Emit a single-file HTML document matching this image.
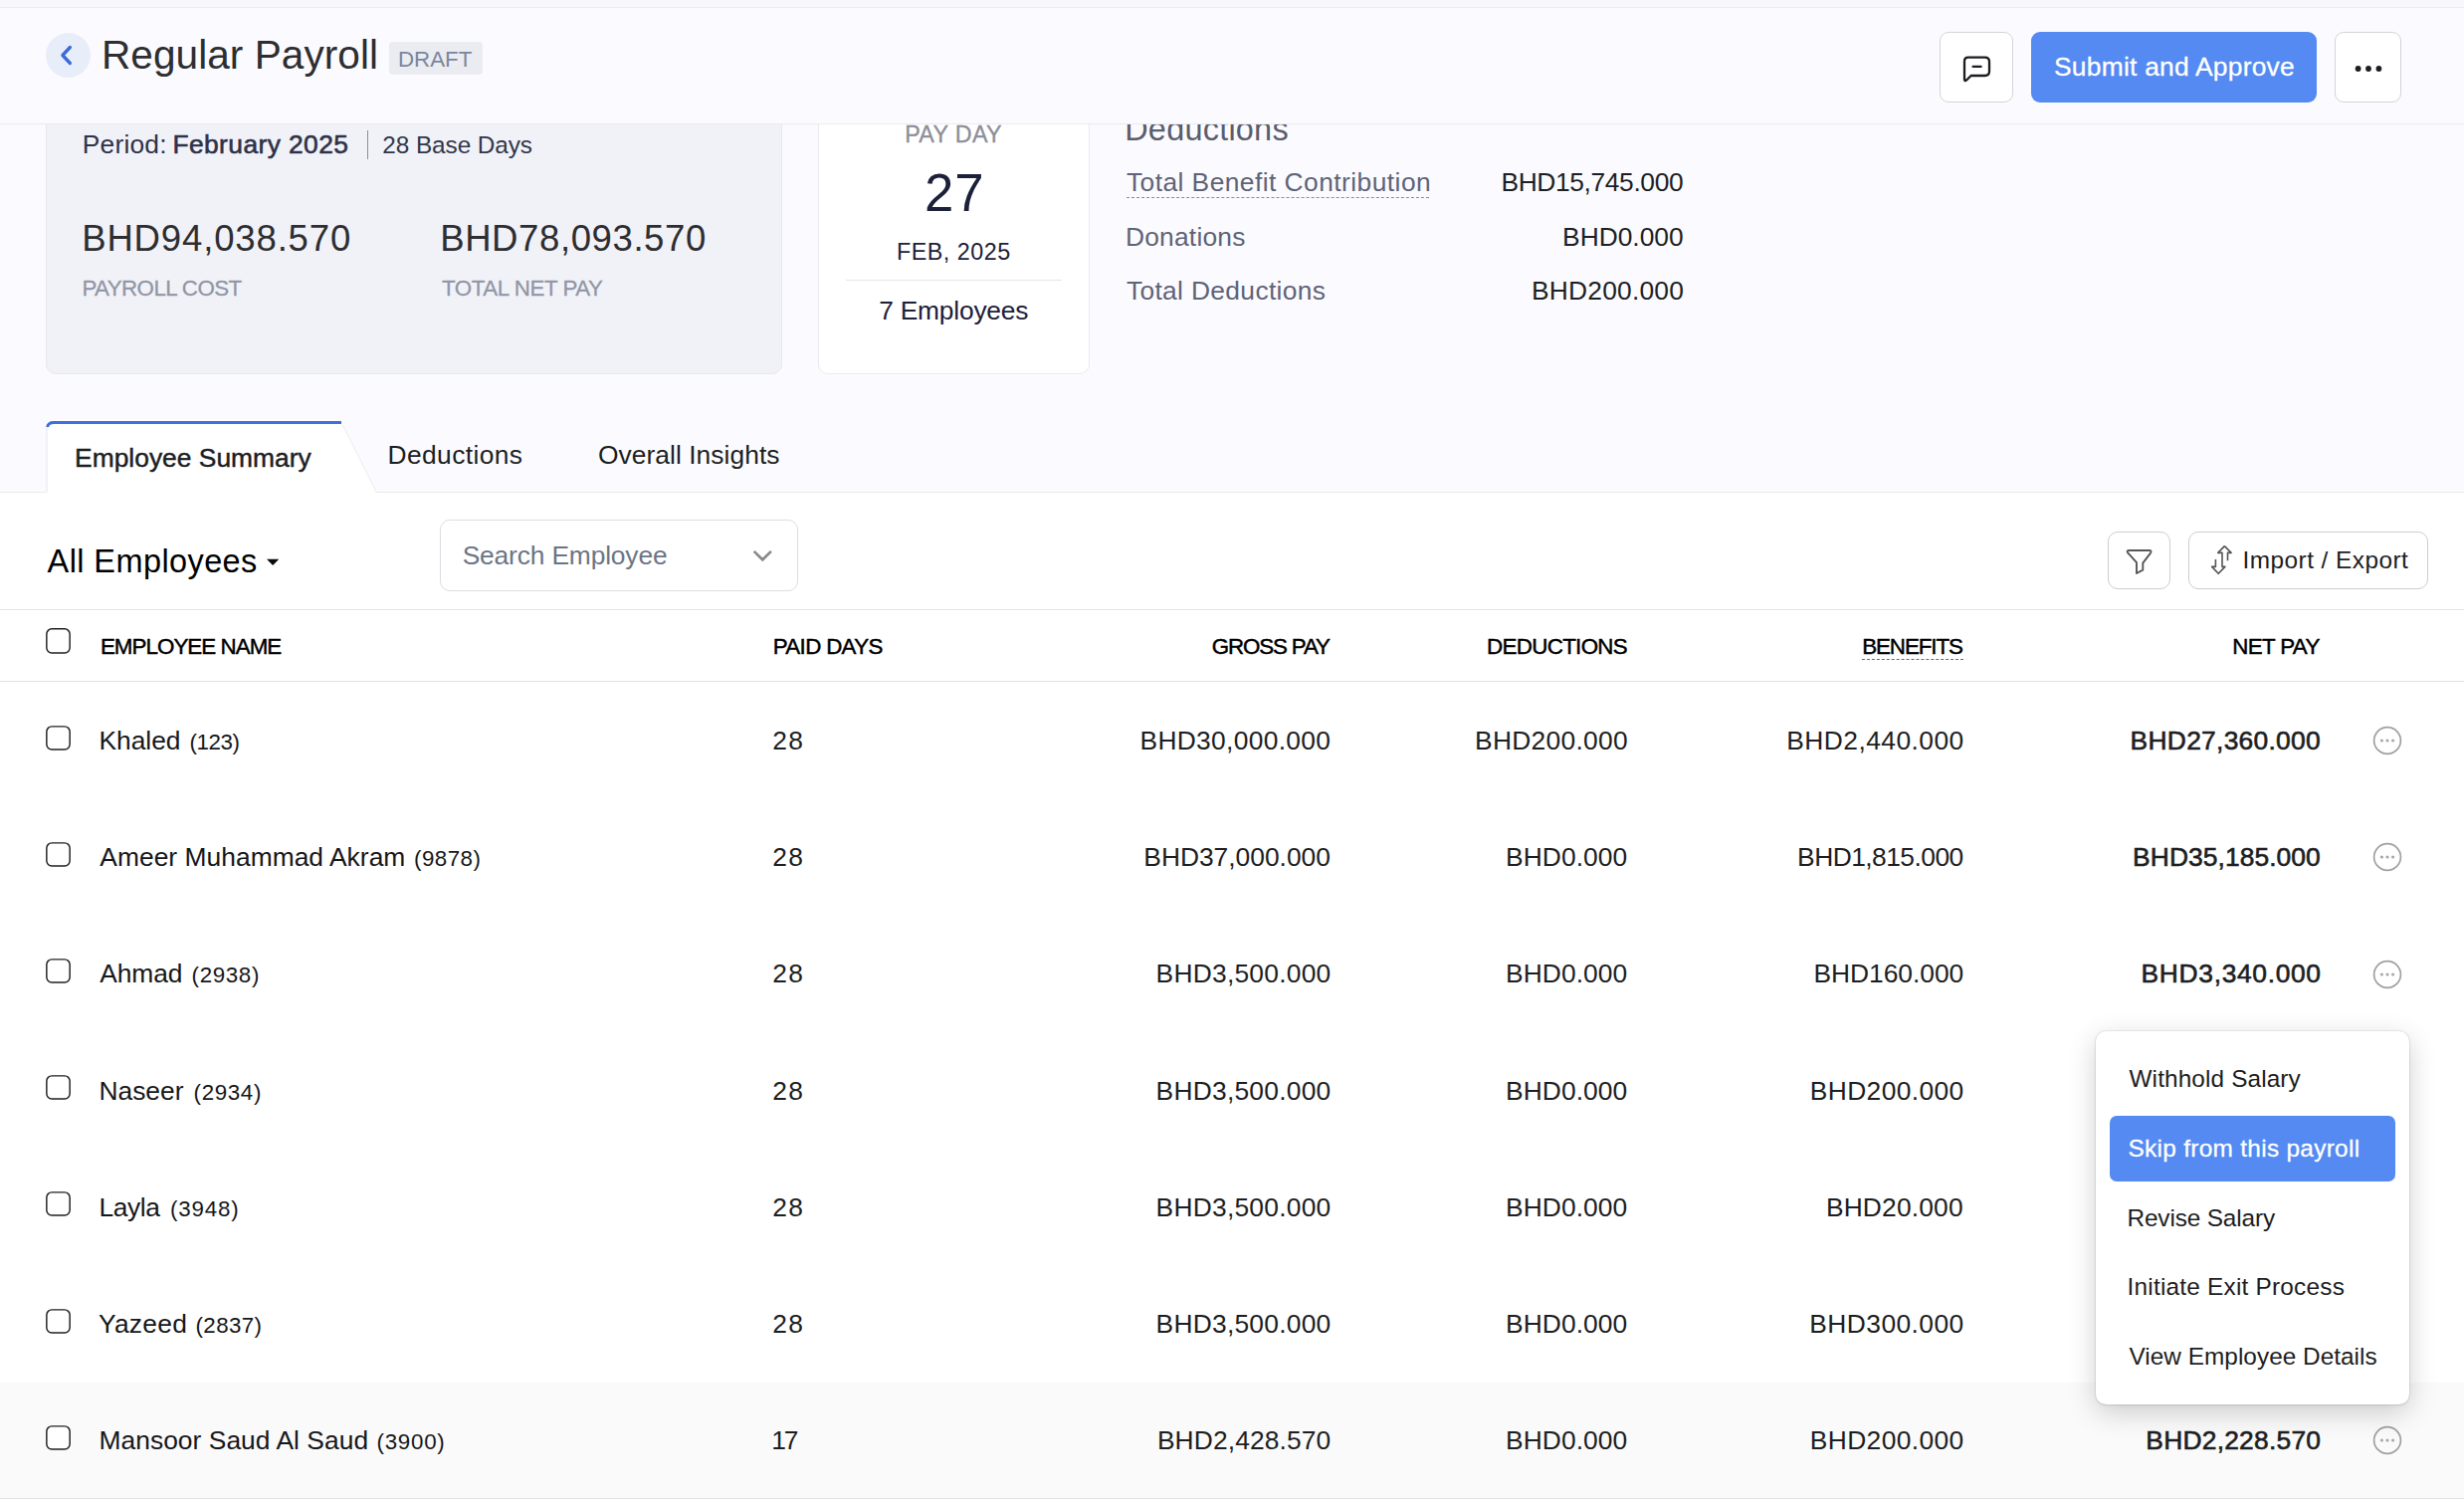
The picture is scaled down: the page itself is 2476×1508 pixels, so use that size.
<!DOCTYPE html>
<html lang="en">
<head>
<meta charset="utf-8">
<title>Regular Payroll</title>
<style>
*{box-sizing:border-box;margin:0;padding:0}
html{width:2476px;height:1508px}
body{width:2476px;height:1508px;overflow:hidden}
body{background:#fbfbff;font-family:"Liberation Sans",sans-serif;position:relative}
.t{position:absolute;white-space:nowrap;display:block}
.abs{position:absolute}
#page{position:absolute;left:0;top:0;width:2476px;height:1508px;overflow:hidden}
#hdr{position:absolute;left:0;top:0;width:2476px;height:125px;background:#fbfbff;border-bottom:1px solid #ebebef;z-index:10}
#strip{position:absolute;left:0;top:0;width:2476px;height:8px;background:#f7f7fc;border-bottom:1.4px solid #ebebef}
.back{position:absolute;left:45.8px;top:32.8px;width:45.4px;height:45.4px;border-radius:50%;background:#e8edfa}
.badge{position:absolute;left:391px;top:42px;width:94px;height:33px;border-radius:4px;background:#ebecf1}
.btn{position:absolute;border:1px solid #d4d4d9;border-radius:9px;background:#fff}
.primary{position:absolute;left:2041px;top:32px;width:287.2px;height:71px;border-radius:9px;background:#548af1}
.card1{position:absolute;left:46px;top:90px;width:740px;height:286px;background:#f1f2f8;border:1px solid #e7e8ef;border-radius:10px}
.card2{position:absolute;left:822px;top:90px;width:273px;height:286px;background:#fff;border:1px solid #e9e9f0;border-radius:10px}
.vdiv{position:absolute;left:369px;top:131px;width:1px;height:29px;background:#8d8f9b}
.hdiv{position:absolute;left:850px;top:280.8px;width:217px;height:1.5px;background:#e6e6ea}
.dash{position:absolute;height:0;border-top:1px dashed #8a8c99}
#white{position:absolute;left:0;top:495px;width:2476px;height:1013px;background:#fff}
.line{position:absolute;left:0;width:2476px;height:1px;background:#e2e2e6}
.search{position:absolute;left:442px;top:522px;width:360px;height:72px;border:1px solid #dcdde3;border-radius:10px;background:#fff}
.cb{position:absolute;left:46px;width:25px;height:25px;display:block;overflow:visible}
.more{position:absolute;left:2384.4px}
.hover{position:absolute;left:0;top:1388.5px;width:2476px;height:117px;background:#fafafa}
#menu{position:absolute;left:2106px;top:1035.5px;width:315px;height:375px;background:#fff;border-radius:10.5px;box-shadow:0 8px 28px rgba(0,0,0,.19),0 1px 3px rgba(0,0,0,.07),0 0 0 1px rgba(200,200,220,.25);z-index:20}
.hl{position:absolute;left:2120px;top:1120.5px;width:287px;height:66.5px;border-radius:7px;background:#548af1;z-index:21}
#menutext{position:absolute;left:0;top:0;z-index:22}
@media (min-width:1236px) and (max-width:1240px){html{zoom:.5}}
</style>
</head>
<body>
<div id="page">
  <div class="card1"></div>
  <div class="vdiv"></div>
  <div class="card2"></div>
  <div class="hdiv"></div>
  <div class="dash" style="left:1132px;top:198px;width:304px"></div>

  <!-- tab bar + white area -->
  <div id="white"></div>
  <div class="line" style="top:494px;background:#e9e9ee"></div>
  <svg class="abs" style="left:40px;top:418px" width="350" height="80" viewBox="40 418 350 80">
    <path d="M47 495 V431 Q47 425 53 425 H337 Q343.5 425 346 430 L378.5 495 Z" fill="#fff"/>
    <path d="M47 494.5 V431 Q47 425 53 425" fill="none" stroke="#e6e6ec" stroke-width="1"/>
    <path d="M343 427 Q345 428 346.5 431 L378.5 495" fill="none" stroke="#ececf1" stroke-width="1"/>
    <path d="M47.6 429 Q48.5 424.6 54 424.6 H343" fill="none" stroke="#3d70d8" stroke-width="3"/>
  </svg>

  <!-- toolbar -->
  <svg class="abs" style="left:268px;top:561px" width="13" height="8" viewBox="0 0 13 8"><path d="M0 0.8 H12.3 L6.15 7 Z" fill="#0a0a0a"/></svg>
  <div class="search"></div>
  <svg class="abs" style="left:755px;top:551px" width="22" height="14" viewBox="0 0 22 14"><path d="M2.7 2.9 L11.3 11.3 L19.9 2.9" fill="none" stroke="#88898d" stroke-width="2.7" stroke-linejoin="miter"/></svg>
  <div class="btn" style="left:2118px;top:534px;width:63px;height:58px;border-color:#cdcdd0;border-radius:10px"></div>
  <svg class="abs" style="left:2134px;top:549px" width="32" height="32" viewBox="2134 549 32 32"><path d="M2139.4 553 H2159.6 Q2162.6 553 2161 555.6 L2153.3 565.6 V572.6 L2147 576 V565.2 L2138.2 555.4 Q2136.6 553 2139.4 553 Z" fill="none" stroke="#565657" stroke-width="1.9" stroke-linejoin="round"/></svg>
  <div class="btn" style="left:2199px;top:534px;width:241px;height:58px;border-color:#cdcdd0;border-radius:10px"></div>
  <svg class="abs" style="left:2220px;top:546px" width="26" height="32" viewBox="0 0 26 32">
    <path transform="translate(-2220 -546)" d="M2235.4 548.6 L2242.1 555.4 H2238.5 V563.2 M2235.4 548.6 L2228.8 555.4 H2233 V569.4 H2235.9 L2229.25 576.3 L2222.6 569.4 H2226.4 V562.1" fill="none" stroke="#555557" stroke-width="1.6" stroke-linejoin="round" stroke-linecap="butt"/>
  </svg>
  <div class="line" style="top:612px"></div>

  <!-- table -->
  <svg class="cb" style="top:631.2px;height:25.8px" viewBox="0 0 25 25.8"><rect x="0.85" y="0.85" width="23.3" height="24.1" rx="5.2" fill="#fff" stroke="#202022" stroke-width="1.45"/></svg>
  <div class="dash" style="left:1871px;top:662px;width:102px;border-top-color:#6b6b70"></div>
  <div class="line" style="top:684px"></div>
  <div class="hover"></div>
  <div class="line" style="top:1505px"></div>
<svg class="cb" style="top:728.6px" viewBox="0 0 25 25"><rect x="0.85" y="0.85" width="23.3" height="23.2" rx="5.2" fill="#fff" stroke="#202022" stroke-width="1.45"/></svg>
<svg class="cb" style="top:845.8px" viewBox="0 0 25 25"><rect x="0.85" y="0.85" width="23.3" height="23.2" rx="5.2" fill="#fff" stroke="#202022" stroke-width="1.45"/></svg>
<svg class="cb" style="top:963.0px" viewBox="0 0 25 25"><rect x="0.85" y="0.85" width="23.3" height="23.2" rx="5.2" fill="#fff" stroke="#202022" stroke-width="1.45"/></svg>
<svg class="cb" style="top:1080.2px" viewBox="0 0 25 25"><rect x="0.85" y="0.85" width="23.3" height="23.2" rx="5.2" fill="#fff" stroke="#202022" stroke-width="1.45"/></svg>
<svg class="cb" style="top:1197.4px" viewBox="0 0 25 25"><rect x="0.85" y="0.85" width="23.3" height="23.2" rx="5.2" fill="#fff" stroke="#202022" stroke-width="1.45"/></svg>
<svg class="cb" style="top:1314.6px" viewBox="0 0 25 25"><rect x="0.85" y="0.85" width="23.3" height="23.2" rx="5.2" fill="#fff" stroke="#202022" stroke-width="1.45"/></svg>
<svg class="cb" style="top:1431.8px" viewBox="0 0 25 25"><rect x="0.85" y="0.85" width="23.3" height="23.2" rx="5.2" fill="#fff" stroke="#202022" stroke-width="1.45"/></svg>
<svg class="more" style="top:729.2px" width="30" height="30" viewBox="0 0 30 30"><circle cx="15" cy="15" r="13.4" fill="none" stroke="#a0a0a0" stroke-width="1.7"/><circle cx="9.4" cy="15" r="1.6" fill="#a8a8a8"/><circle cx="15" cy="15" r="1.6" fill="#a8a8a8"/><circle cx="20.6" cy="15" r="1.6" fill="#a8a8a8"/></svg>
<svg class="more" style="top:846.4px" width="30" height="30" viewBox="0 0 30 30"><circle cx="15" cy="15" r="13.4" fill="none" stroke="#a0a0a0" stroke-width="1.7"/><circle cx="9.4" cy="15" r="1.6" fill="#a8a8a8"/><circle cx="15" cy="15" r="1.6" fill="#a8a8a8"/><circle cx="20.6" cy="15" r="1.6" fill="#a8a8a8"/></svg>
<svg class="more" style="top:963.6px" width="30" height="30" viewBox="0 0 30 30"><circle cx="15" cy="15" r="13.4" fill="none" stroke="#a0a0a0" stroke-width="1.7"/><circle cx="9.4" cy="15" r="1.6" fill="#a8a8a8"/><circle cx="15" cy="15" r="1.6" fill="#a8a8a8"/><circle cx="20.6" cy="15" r="1.6" fill="#a8a8a8"/></svg>
<svg class="more" style="top:1432.4px" width="30" height="30" viewBox="0 0 30 30"><circle cx="15" cy="15" r="13.4" fill="none" stroke="#a0a0a0" stroke-width="1.7"/><circle cx="9.4" cy="15" r="1.6" fill="#a8a8a8"/><circle cx="15" cy="15" r="1.6" fill="#a8a8a8"/><circle cx="20.6" cy="15" r="1.6" fill="#a8a8a8"/></svg>
<span class="t" style="left:82.75px;top:132px;color:#2e3248;letter-spacing:0.208px;font-size:26.39px;line-height:26.39px;">Period:</span>
<span class="t" style="left:173.4px;top:132px;color:#2e3248;letter-spacing:0.417px;font-size:26.39px;line-height:26.39px;-webkit-text-stroke:0.6px #2e3248;">February 2025</span>
<span class="t" style="left:384.3px;top:134px;color:#33364a;letter-spacing:-0.082px;font-size:24.36px;line-height:24.36px;">28 Base Days</span>
<span class="t" style="left:82.2px;top:222px;color:#2e2e31;letter-spacing:0.842px;font-size:36.54px;line-height:36.54px;">BHD94,038.570</span>
<span class="t" style="left:442.2px;top:222px;color:#2e2e31;letter-spacing:0.592px;font-size:36.54px;line-height:36.54px;">BHD78,093.570</span>
<span class="t" style="left:82.4px;top:279px;color:#9196a6;letter-spacing:-0.573px;font-size:22.33px;line-height:22.33px;-webkit-text-stroke:0.3px #9196a6;">PAYROLL COST</span>
<span class="t" style="left:444.0px;top:279px;color:#9196a6;letter-spacing:-0.425px;font-size:22.33px;line-height:22.33px;-webkit-text-stroke:0.3px #9196a6;">TOTAL NET PAY</span>
<span class="t" style="left:909.2px;top:124px;color:#8c8e98;letter-spacing:0.317px;font-size:23.34px;line-height:23.34px;-webkit-text-stroke:0.3px #8c8e98;">PAY DAY</span>
<span class="t" style="left:929.0px;top:168px;color:#1c2039;letter-spacing:0.8px;font-size:52.78px;line-height:52.78px;">27</span>
<span class="t" style="left:900.9px;top:242px;color:#1c2039;letter-spacing:0.525px;font-size:23.34px;line-height:23.34px;">FEB, 2025</span>
<span class="t" style="left:883.2px;top:299px;color:#1c2039;letter-spacing:-0.22px;font-size:26.39px;line-height:26.39px;">7 Employees</span>
<span class="t" style="left:1130.2px;top:114px;color:#5a5d6e;letter-spacing:0.222px;font-size:32.48px;line-height:32.48px;">Deductions</span>
<span class="t" style="left:1131.9px;top:170px;color:#5f6377;letter-spacing:0.444px;font-size:26.39px;line-height:26.39px;">Total Benefit Contribution</span>
<span class="t" style="left:1508.5px;top:170px;color:#1e1f24;letter-spacing:-0.383px;font-size:26.39px;line-height:26.39px;">BHD15,745.000</span>
<span class="t" style="left:1130.9px;top:225px;color:#5f6377;letter-spacing:0.225px;font-size:26.39px;line-height:26.39px;">Donations</span>
<span class="t" style="left:1570.1px;top:225px;color:#1e1f24;letter-spacing:-0.029px;font-size:26.39px;line-height:26.39px;">BHD0.000</span>
<span class="t" style="left:1131.9px;top:279px;color:#5f6377;letter-spacing:0.34px;font-size:26.39px;line-height:26.39px;">Total Deductions</span>
<span class="t" style="left:1538.9px;top:279px;color:#1e1f24;letter-spacing:0.222px;font-size:26.39px;line-height:26.39px;">BHD200.000</span>
<span class="t" style="left:75.1px;top:447px;color:#1d1e22;letter-spacing:0.013px;font-size:26.39px;line-height:26.39px;-webkit-text-stroke:0.45px #1d1e22;">Employee Summary</span>
<span class="t" style="left:389.6px;top:444px;color:#1d1e22;letter-spacing:0.378px;font-size:26.39px;line-height:26.39px;">Deductions</span>
<span class="t" style="left:600.9px;top:444px;color:#1d1e22;letter-spacing:0.053px;font-size:26.39px;line-height:26.39px;">Overall Insights</span>
<span class="t" style="left:47.6px;top:548px;color:#000000;letter-spacing:0.417px;font-size:32.48px;line-height:32.48px;">All Employees</span>
<span class="t" style="left:464.7px;top:545px;color:#6c7585;letter-spacing:-0.164px;font-size:26.39px;line-height:26.39px;">Search Employee</span>
<span class="t" style="left:2253.6px;top:551px;color:#1d1e22;letter-spacing:0.457px;font-size:24.36px;line-height:24.36px;">Import / Export</span>
<span class="t" style="left:100.9px;top:639px;color:#000000;letter-spacing:-0.933px;font-size:22.33px;line-height:22.33px;-webkit-text-stroke:0.45px #000000;">EMPLOYEE NAME</span>
<span class="t" style="left:776.8px;top:639px;color:#000000;letter-spacing:-0.663px;font-size:22.33px;line-height:22.33px;-webkit-text-stroke:0.45px #000000;">PAID DAYS</span>
<span class="t" style="left:1217.7px;top:639px;color:#000000;letter-spacing:-1.125px;font-size:22.33px;line-height:22.33px;-webkit-text-stroke:0.45px #000000;">GROSS PAY</span>
<span class="t" style="left:1494.1px;top:639px;color:#000000;letter-spacing:-0.667px;font-size:22.33px;line-height:22.33px;-webkit-text-stroke:0.45px #000000;">DEDUCTIONS</span>
<span class="t" style="left:1871.2px;top:639px;color:#000000;letter-spacing:-1.071px;font-size:22.33px;line-height:22.33px;-webkit-text-stroke:0.45px #000000;">BENEFITS</span>
<span class="t" style="left:2243.2px;top:639px;color:#000000;letter-spacing:-0.617px;font-size:22.33px;line-height:22.33px;-webkit-text-stroke:0.45px #000000;">NET PAY</span>
<span class="t" style="left:99.5px;top:731px;color:#16171a;letter-spacing:-0.02px;font-size:26.39px;line-height:26.39px;">Khaled</span>
<span class="t" style="left:190.5px;top:735px;color:#16171a;letter-spacing:-0.45px;font-size:22.33px;line-height:22.33px;">(123)</span>
<span class="t" style="left:776.3px;top:731px;color:#1d1e22;letter-spacing:1.2px;font-size:26.39px;line-height:26.39px;">28</span>
<span class="t" style="left:1145.5px;top:731px;color:#1d1e22;letter-spacing:0.308px;font-size:26.39px;line-height:26.39px;">BHD30,000.000</span>
<span class="t" style="left:1482.0px;top:731px;color:#1d1e22;letter-spacing:0.289px;font-size:26.39px;line-height:26.39px;">BHD200.000</span>
<span class="t" style="left:1795.3px;top:731px;color:#1d1e22;letter-spacing:0.445px;font-size:26.39px;line-height:26.39px;">BHD2,440.000</span>
<span class="t" style="left:2140.6px;top:731px;color:#1d1e22;letter-spacing:0.283px;font-size:26.39px;line-height:26.39px;-webkit-text-stroke:0.6px #1d1e22;">BHD27,360.000</span>
<span class="t" style="left:100.3px;top:848px;color:#16171a;letter-spacing:0.037px;font-size:26.39px;line-height:26.39px;">Ameer Muhammad Akram</span>
<span class="t" style="left:416.1px;top:852px;color:#16171a;letter-spacing:0.46px;font-size:22.33px;line-height:22.33px;">(9878)</span>
<span class="t" style="left:776.3px;top:848px;color:#1d1e22;letter-spacing:1.2px;font-size:26.39px;line-height:26.39px;">28</span>
<span class="t" style="left:1149.3px;top:848px;color:#1d1e22;letter-spacing:-0.008px;font-size:26.39px;line-height:26.39px;">BHD37,000.000</span>
<span class="t" style="left:1513.0px;top:848px;color:#1d1e22;letter-spacing:0.086px;font-size:26.39px;line-height:26.39px;">BHD0.000</span>
<span class="t" style="left:1806.1px;top:848px;color:#1d1e22;letter-spacing:-0.536px;font-size:26.39px;line-height:26.39px;">BHD1,815.000</span>
<span class="t" style="left:2143.1px;top:848px;color:#1d1e22;letter-spacing:0.075px;font-size:26.39px;line-height:26.39px;-webkit-text-stroke:0.6px #1d1e22;">BHD35,185.000</span>
<span class="t" style="left:100.3px;top:965px;color:#16171a;letter-spacing:-0.1px;font-size:26.39px;line-height:26.39px;">Ahmad</span>
<span class="t" style="left:192.6px;top:969px;color:#16171a;letter-spacing:0.64px;font-size:22.33px;line-height:22.33px;">(2938)</span>
<span class="t" style="left:776.3px;top:965px;color:#1d1e22;letter-spacing:1.2px;font-size:26.39px;line-height:26.39px;">28</span>
<span class="t" style="left:1161.6px;top:965px;color:#1d1e22;letter-spacing:0.236px;font-size:26.39px;line-height:26.39px;">BHD3,500.000</span>
<span class="t" style="left:1513.0px;top:965px;color:#1d1e22;letter-spacing:0.086px;font-size:26.39px;line-height:26.39px;">BHD0.000</span>
<span class="t" style="left:1822.5px;top:965px;color:#1d1e22;letter-spacing:-0.033px;font-size:26.39px;line-height:26.39px;">BHD160.000</span>
<span class="t" style="left:2151.6px;top:965px;color:#1d1e22;letter-spacing:0.673px;font-size:26.39px;line-height:26.39px;-webkit-text-stroke:0.6px #1d1e22;">BHD3,340.000</span>
<span class="t" style="left:99.5px;top:1083px;color:#16171a;letter-spacing:-0.02px;font-size:26.39px;line-height:26.39px;">Naseer</span>
<span class="t" style="left:194.6px;top:1087px;color:#16171a;letter-spacing:0.64px;font-size:22.33px;line-height:22.33px;">(2934)</span>
<span class="t" style="left:776.3px;top:1083px;color:#1d1e22;letter-spacing:1.2px;font-size:26.39px;line-height:26.39px;">28</span>
<span class="t" style="left:1161.6px;top:1083px;color:#1d1e22;letter-spacing:0.236px;font-size:26.39px;line-height:26.39px;">BHD3,500.000</span>
<span class="t" style="left:1513.0px;top:1083px;color:#1d1e22;letter-spacing:0.086px;font-size:26.39px;line-height:26.39px;">BHD0.000</span>
<span class="t" style="left:1818.8px;top:1083px;color:#1d1e22;letter-spacing:0.378px;font-size:26.39px;line-height:26.39px;">BHD200.000</span>
<span class="t" style="left:99.5px;top:1200px;color:#16171a;letter-spacing:-0.425px;font-size:26.39px;line-height:26.39px;">Layla</span>
<span class="t" style="left:171.0px;top:1204px;color:#16171a;letter-spacing:0.84px;font-size:22.33px;line-height:22.33px;">(3948)</span>
<span class="t" style="left:776.3px;top:1200px;color:#1d1e22;letter-spacing:1.2px;font-size:26.39px;line-height:26.39px;">28</span>
<span class="t" style="left:1161.6px;top:1200px;color:#1d1e22;letter-spacing:0.236px;font-size:26.39px;line-height:26.39px;">BHD3,500.000</span>
<span class="t" style="left:1513.0px;top:1200px;color:#1d1e22;letter-spacing:0.086px;font-size:26.39px;line-height:26.39px;">BHD0.000</span>
<span class="t" style="left:1834.9px;top:1200px;color:#1d1e22;letter-spacing:0.163px;font-size:26.39px;line-height:26.39px;">BHD20.000</span>
<span class="t" style="left:99.0px;top:1317px;color:#16171a;letter-spacing:0.28px;font-size:26.39px;line-height:26.39px;">Yazeed</span>
<span class="t" style="left:196.6px;top:1321px;color:#16171a;letter-spacing:0.34px;font-size:22.33px;line-height:22.33px;">(2837)</span>
<span class="t" style="left:776.3px;top:1317px;color:#1d1e22;letter-spacing:1.2px;font-size:26.39px;line-height:26.39px;">28</span>
<span class="t" style="left:1161.6px;top:1317px;color:#1d1e22;letter-spacing:0.236px;font-size:26.39px;line-height:26.39px;">BHD3,500.000</span>
<span class="t" style="left:1513.0px;top:1317px;color:#1d1e22;letter-spacing:0.086px;font-size:26.39px;line-height:26.39px;">BHD0.000</span>
<span class="t" style="left:1818.3px;top:1317px;color:#1d1e22;letter-spacing:0.433px;font-size:26.39px;line-height:26.39px;">BHD300.000</span>
<span class="t" style="left:99.5px;top:1434px;color:#16171a;letter-spacing:0.042px;font-size:26.39px;line-height:26.39px;">Mansoor Saud Al Saud</span>
<span class="t" style="left:378.5px;top:1438px;color:#16171a;letter-spacing:0.74px;font-size:22.33px;line-height:22.33px;">(3900)</span>
<span class="t" style="left:775.3px;top:1434px;color:#1d1e22;letter-spacing:-2.3px;font-size:26.39px;line-height:26.39px;">17</span>
<span class="t" style="left:1162.9px;top:1434px;color:#1d1e22;letter-spacing:0.118px;font-size:26.39px;line-height:26.39px;">BHD2,428.570</span>
<span class="t" style="left:1513.0px;top:1434px;color:#1d1e22;letter-spacing:0.086px;font-size:26.39px;line-height:26.39px;">BHD0.000</span>
<span class="t" style="left:1818.8px;top:1434px;color:#1d1e22;letter-spacing:0.378px;font-size:26.39px;line-height:26.39px;">BHD200.000</span>
<span class="t" style="left:2156.3px;top:1434px;color:#1d1e22;letter-spacing:0.245px;font-size:26.39px;line-height:26.39px;-webkit-text-stroke:0.6px #1d1e22;">BHD2,228.570</span>
</div>

<div id="hdr">
  <div id="strip"></div>
  <div class="back"></div>
  <svg class="abs" style="left:56px;top:42px" width="24" height="27" viewBox="56 42 24 27"><path d="M70.4 47.5 L62.9 55.5 L70.4 63.5" fill="none" stroke="#3b6bd6" stroke-width="3.3" stroke-linecap="round" stroke-linejoin="round"/></svg>
  <div class="badge"></div>
  <div class="btn" style="left:1949px;top:32px;width:74px;height:71px"></div>
  <svg class="abs" style="left:1968px;top:52px" width="36" height="36" viewBox="0 0 36 36"><path d="M9.8 5.6 H26.6 Q31 5.6 31 10 V19.6 Q31 24 26.6 24 H12.6 L8.4 28.2 Q6 30.4 6 27.4 V9.4 Q6 5.6 9.8 5.6 Z" fill="none" stroke="#1b1c20" stroke-width="2.3" stroke-linejoin="round"/><path d="M14.6 14.9 H22.6" stroke="#1b1c20" stroke-width="2.3" stroke-linecap="round"/></svg>
  <div class="primary"></div>
  <div class="btn" style="left:2346px;top:32px;width:67px;height:71px"></div>
  <svg class="abs" style="left:2364px;top:64px" width="32" height="10" viewBox="0 0 32 10"><circle cx="5.6" cy="5" r="2.9" fill="#1d1e22"/><circle cx="16" cy="5" r="2.9" fill="#1d1e22"/><circle cx="26.4" cy="5" r="2.9" fill="#1d1e22"/></svg>
<span class="t" style="left:102.0px;top:35px;color:#2e2e31;letter-spacing:0.043px;font-size:40.6px;line-height:40.6px;">Regular Payroll</span>
<span class="t" style="left:399.9px;top:49px;color:#7a869e;letter-spacing:0.025px;font-size:22.33px;line-height:22.33px;">DRAFT</span>
<span class="t" style="left:2064.0px;top:54px;color:#ffffff;letter-spacing:0.247px;font-size:26.39px;line-height:26.39px;-webkit-text-stroke:0.3px #ffffff;">Submit and Approve</span>
</div>

<div id="menu"></div>
<div class="hl"></div>
<div id="menutext">
<span class="t" style="left:2139.5px;top:1072px;color:#1d1e22;letter-spacing:0.121px;font-size:24.36px;line-height:24.36px;">Withhold Salary</span>
<span class="t" style="left:2138.5px;top:1142px;color:#ffffff;letter-spacing:0.31px;font-size:24.36px;line-height:24.36px;-webkit-text-stroke:0.3px #ffffff;">Skip from this payroll</span>
<span class="t" style="left:2137.5px;top:1212px;color:#1d1e22;letter-spacing:-0.142px;font-size:24.36px;line-height:24.36px;">Revise Salary</span>
<span class="t" style="left:2137.5px;top:1281px;color:#1d1e22;letter-spacing:0.22px;font-size:24.36px;line-height:24.36px;">Initiate Exit Process</span>
<span class="t" style="left:2139.5px;top:1351px;color:#1d1e22;letter-spacing:0.025px;font-size:24.36px;line-height:24.36px;">View Employee Details</span>
</div>
</body>
</html>
